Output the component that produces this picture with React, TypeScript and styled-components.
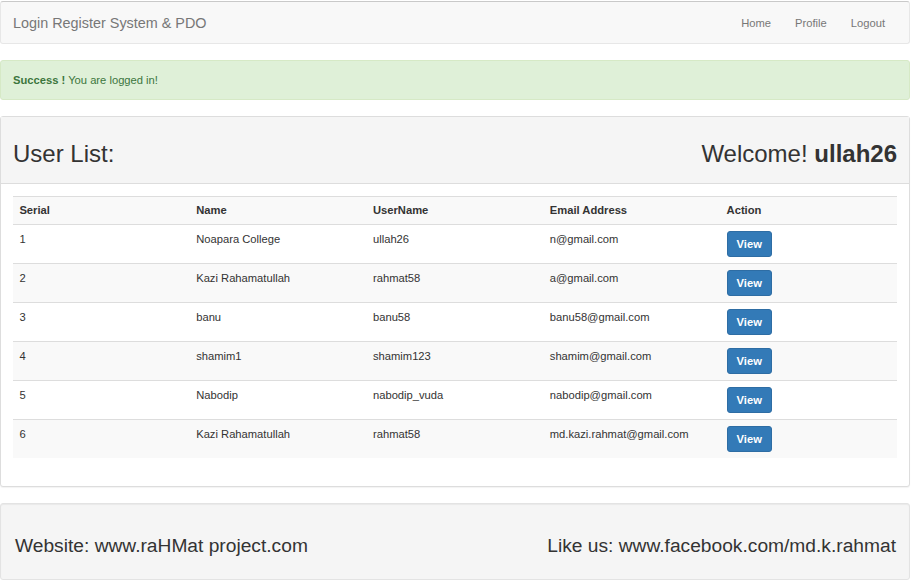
import React from "react";
import styled, { createGlobalStyle } from "styled-components";

const Global = createGlobalStyle`
  html, body { margin: 0; padding: 0; background: #fff; }
  body {
    padding-top: 1px;
    font-family: "Liberation Sans", Arial, Helvetica, sans-serif;
    font-size: 11.2px;
    line-height: 16px;
    color: #333;
  }
  * { box-sizing: border-box; }
`;

const Page = styled.div`
  width: 910px;
`;

const Navbar = styled.nav`
  display: flex;
  align-items: center;
  justify-content: space-between;
  height: 43px;
  background: #f8f8f8;
  border: 1px solid #e7e7e7;
  border-top-color: #c9c9c9;
  border-radius: 3px;
  margin-bottom: 16px;
`;

const Brand = styled.a`
  padding: 0 12px;
  font-size: 14.4px;
  line-height: 16px;
  color: #777;
  text-decoration: none;
`;

const NavList = styled.ul`
  display: flex;
  list-style: none;
  margin: 0 12px 0 0;
  padding: 0;
`;

const NavLink = styled.a`
  display: block;
  padding: 12px;
  font-size: 11.2px;
  line-height: 16px;
  color: #777;
  text-decoration: none;
`;

const Alert = styled.div`
  padding: 11px 12px;
  line-height: 16px;
  background: #dff0d8;
  border: 1px solid #d6e9c6;
  border-radius: 3px;
  color: #3c763d;
  margin-bottom: 16px;
`;

const Panel = styled.section`
  border: 1px solid #ddd;
  border-radius: 3px;
  background: #fff;
  box-shadow: 0 1px 1px rgba(0, 0, 0, 0.05);
  margin-bottom: 16px;
`;

const PanelHeading = styled.div`
  display: flex;
  justify-content: space-between;
  align-items: flex-start;
  padding: 8px 12px;
  background: #f5f5f5;
  border-bottom: 1px solid #ddd;
`;

const Title = styled.h2`
  margin: 16px 0 8px;
  font-size: 24px;
  line-height: 26.4px;
  font-weight: 400;
  color: #333;
`;

const PanelBody = styled.div`
  padding: 12px;
`;

const Table = styled.table`
  width: 100%;
  table-layout: fixed;
  border-collapse: collapse;
  margin-bottom: 16px;
`;

const Row = styled.tr`
  &:nth-of-type(odd) {
    background: #f9f9f9;
  }
`;

const Head = styled.th`
  text-align: left;
  font-weight: 700;
  padding: 5px 6.4px 6px;
  line-height: 16px;
  border-top: 1px solid #ddd;
  vertical-align: top;
`;

const Cell = styled.td`
  padding: 6px 6.4px;
  line-height: 16px;
  border-top: 1px solid #ddd;
  vertical-align: top;
`;

const ViewButton = styled.button`
  display: inline-block;
  vertical-align: top;
  height: 26px;
  padding: 4px 9px;
  font-family: inherit;
  font-size: 11.2px;
  line-height: 16px;
  font-weight: 700;
  color: #fff;
  background: #337ab7;
  border: 1px solid #2e6da4;
  border-radius: 3px;
  cursor: pointer;
`;

const Well = styled.footer`
  display: flex;
  justify-content: space-between;
  padding: 15px 13px 15px 14px;
  background: #f5f5f5;
  border: 1px solid #e3e3e3;
  border-radius: 3px;
  box-shadow: inset 0 1px 1px rgba(0, 0, 0, 0.05);
`;

const FooterText = styled.h3`
  margin: 16px 0 8px;
  font-size: 19.2px;
  line-height: 21px;
  font-weight: 400;
  color: #333;
`;

const users = [
  { id: 1, name: "Noapara College", user: "ullah26", email: "n@gmail.com" },
  { id: 2, name: "Kazi Rahamatullah", user: "rahmat58", email: "a@gmail.com" },
  { id: 3, name: "banu", user: "banu58", email: "banu58@gmail.com" },
  { id: 4, name: "shamim1", user: "shamim123", email: "shamim@gmail.com" },
  { id: 5, name: "Nabodip", user: "nabodip_vuda", email: "nabodip@gmail.com" },
  { id: 6, name: "Kazi Rahamatullah", user: "rahmat58", email: "md.kazi.rahmat@gmail.com" },
];

export default function App() {
  return (
    <Page>
      <Global />
      <Navbar>
        <Brand href="#">Login Register System &amp; PDO</Brand>
        <NavList>
          <li><NavLink href="#">Home</NavLink></li>
          <li><NavLink href="#">Profile</NavLink></li>
          <li><NavLink href="#">Logout</NavLink></li>
        </NavList>
      </Navbar>

      <Alert>
        <strong>Success !</strong> You are logged in!
      </Alert>

      <Panel>
        <PanelHeading>
          <Title>User List:</Title>
          <Title>
            Welcome! <strong>ullah26</strong>
          </Title>
        </PanelHeading>
        <PanelBody>
          <Table>
            <tbody>
              <Row>
                <Head>Serial</Head>
                <Head>Name</Head>
                <Head>UserName</Head>
                <Head>Email Address</Head>
                <Head>Action</Head>
              </Row>
              {users.map((u) => (
                <Row key={u.id}>
                  <Cell>{u.id}</Cell>
                  <Cell>{u.name}</Cell>
                  <Cell>{u.user}</Cell>
                  <Cell>{u.email}</Cell>
                  <Cell>
                    <ViewButton>View</ViewButton>
                  </Cell>
                </Row>
              ))}
            </tbody>
          </Table>
        </PanelBody>
      </Panel>

      <Well>
        <FooterText>Website: www.raHMat project.com</FooterText>
        <FooterText>Like us: www.facebook.com/md.k.rahmat</FooterText>
      </Well>
    </Page>
  );
}
